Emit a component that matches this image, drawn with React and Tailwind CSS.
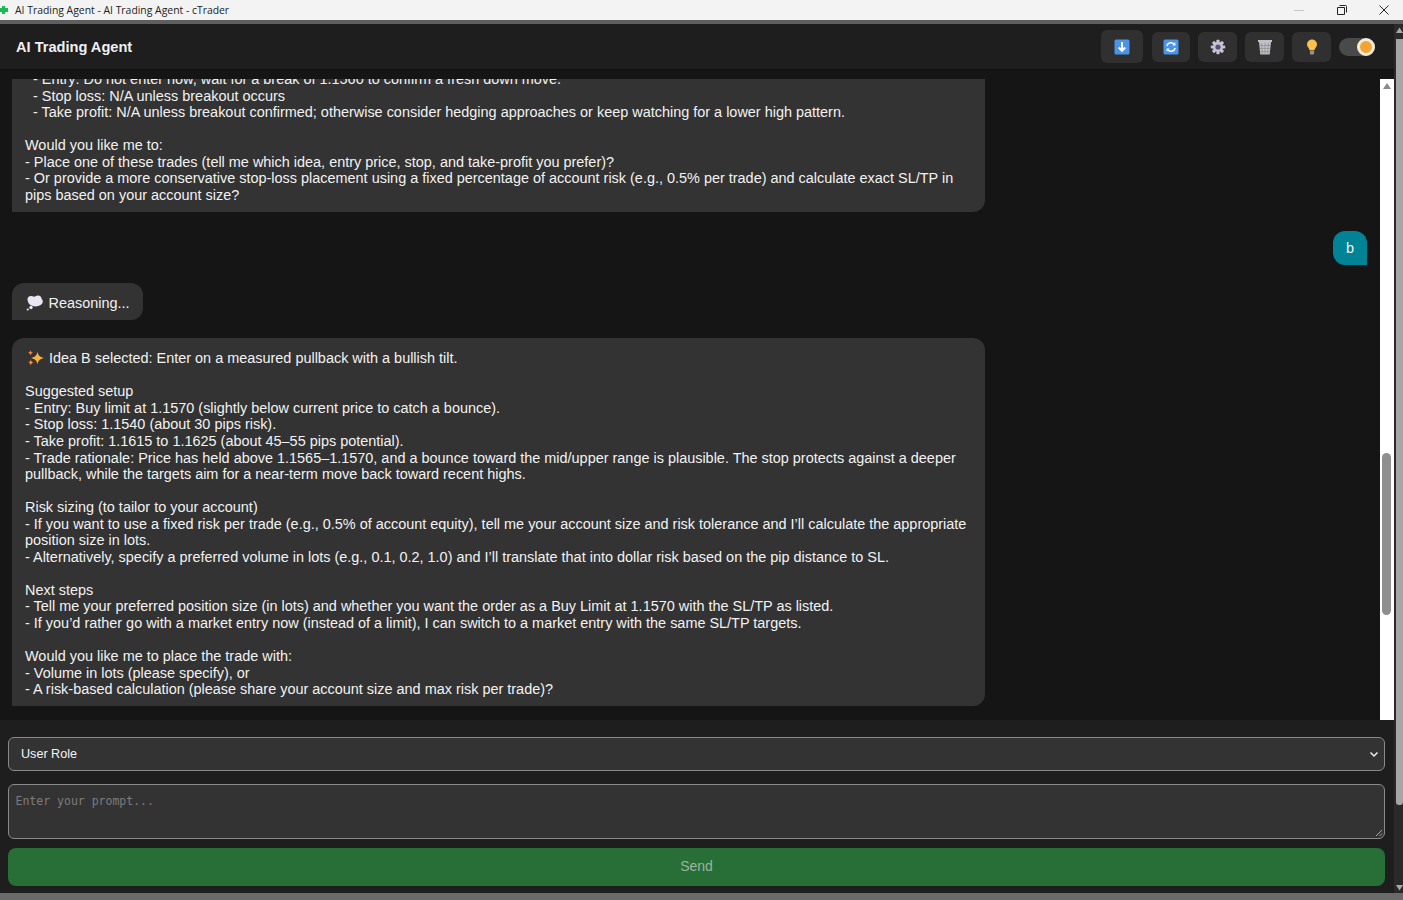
const lines1 = [
  '  - Entry: Do not enter now, wait for a break of 1.1560 to confirm a fresh down move.',
  '  - Stop loss: N/A unless breakout occurs',
  '  - Take profit: N/A unless breakout confirmed; otherwise consider hedging approaches or keep watching for a lower high pattern.',
  '',
  'Would you like me to:',
  '- Place one of these trades (tell me which idea, entry price, stop, and take-profit you prefer)?',
  '- Or provide a more conservative stop-loss placement using a fixed percentage of account risk (e.g., 0.5% per trade) and calculate exact SL/TP in pips based on your account size?',
].join('\n');

const lines2 = [
  'Suggested setup',
  '- Entry: Buy limit at 1.1570 (slightly below current price to catch a bounce).',
  '- Stop loss: 1.1540 (about 30 pips risk).',
  '- Take profit: 1.1615 to 1.1625 (about 45–55 pips potential).',
  '- Trade rationale: Price has held above 1.1565–1.1570, and a bounce toward the mid/upper range is plausible. The stop protects against a deeper pullback, while the targets aim for a near-term move back toward recent highs.',
  '',
  'Risk sizing (to tailor to your account)',
  '- If you want to use a fixed risk per trade (e.g., 0.5% of account equity), tell me your account size and risk tolerance and I’ll calculate the appropriate position size in lots.',
  '- Alternatively, specify a preferred volume in lots (e.g., 0.1, 0.2, 1.0) and I’ll translate that into dollar risk based on the pip distance to SL.',
  '',
  'Next steps',
  '- Tell me your preferred position size (in lots) and whether you want the order as a Buy Limit at 1.1570 with the SL/TP as listed.',
  '- If you’d rather go with a market entry now (instead of a limit), I can switch to a market entry with the same SL/TP targets.',
  '',
  'Would you like me to place the trade with:',
  '- Volume in lots (please specify), or',
  '- A risk-based calculation (please share your account size and max risk per trade)?',
].join('\n');

function DownloadIcon() {
  return (
    <svg width="16" height="16" viewBox="0 0 16 16">
      <rect x="0.500" y="0.500" width="15" height="15" rx="1.500" fill="#4a94ea" />
      <path d="M8 3v9M4.800 8.500L8 11.800l3.200-3.300" fill="none" stroke="#fff" strokeWidth="2" />
    </svg>
  );
}

function SyncIcon() {
  return (
    <svg width="16" height="16" viewBox="0 0 16 16">
      <rect x="0.500" y="0.500" width="15" height="15" rx="1.500" fill="#4a94ea" />
      <path d="M3.800 7a4.300 4.300 0 0 1 7.600-1.600M12.200 9a4.300 4.300 0 0 1-7.600 1.600" fill="none" stroke="#fff" strokeWidth="1.500" />
      <path d="M12.400 3.200v3.200H9.200zM3.600 12.800V9.600h3.200z" fill="#fff" />
    </svg>
  );
}

function GearIcon() {
  return (
    <svg width="16" height="16" viewBox="0 0 16 16">
      <g fill="#c9c4d4">
        <circle cx="8" cy="8" r="5" />
        <rect x="6.400" y="0.800" width="3.200" height="14.400" rx="0.800" />
        <rect x="6.400" y="0.800" width="3.200" height="14.400" rx="0.800" transform="rotate(45 8 8)" />
        <rect x="6.400" y="0.800" width="3.200" height="14.400" rx="0.800" transform="rotate(90 8 8)" />
        <rect x="6.400" y="0.800" width="3.200" height="14.400" rx="0.800" transform="rotate(135 8 8)" />
      </g>
      <circle cx="8" cy="8" r="2.600" fill="#5a4f78" />
    </svg>
  );
}

function TrashIcon() {
  return (
    <svg width="16" height="16" viewBox="0 0 16 16">
      <path d="M1 1h14v2h-1l-1.300 12.500H3.300L2 3H1z" fill="#c0c0c6" />
      <path d="M4.500 4l.8 11M8 4v11M11.500 4l-.8 11M2.600 6.500h10.800M3 9.500h10M3.200 12.500h9.600" stroke="#85858a" strokeWidth="0.600" fill="none" />
    </svg>
  );
}

function BulbIcon() {
  return (
    <svg width="14" height="16" viewBox="0 0 14 16">
      <path d="M7 0.500a5 5 0 0 0-5 5c0 2.300 1.900 3.300 2.600 5.700h4.800C10.100 8.800 12 7.800 12 5.500a5 5 0 0 0-5-5z" fill="#fbc04a" />
      <rect x="4.900" y="11.400" width="4.200" height="4" rx="1" fill="#9c8f86" />
    </svg>
  );
}

function ThoughtIcon() {
  return (
    <svg width="17" height="16" viewBox="0 0 17 16" className="shrink-0">
      <g fill="#e9e6f2">
        <ellipse cx="9.500" cy="6.500" rx="7.300" ry="5" />
        <circle cx="5" cy="4.500" r="3.500" />
        <circle cx="12" cy="4" r="3.500" />
        <circle cx="5" cy="12.500" r="1.700" />
        <circle cx="1.800" cy="14.500" r="1.100" />
      </g>
    </svg>
  );
}

function SparkleIcon() {
  return (
    <svg width="17" height="16" viewBox="0 0 17 16" className="shrink-0">
      <path d="M10.500 1.500c.7 4 2.100 5.400 6.300 6.500-4.200 1.100-5.600 2.500-6.300 6.500C9.800 10.500 8.400 9.100 4.200 8c4.200-1.100 5.600-2.500 6.300-6.500z" fill="#f9b23d" />
      <path d="M3.500 0c.4 1.800 1 2.400 2.800 2.800-1.800.4-2.400 1-2.800 2.800C3.100 3.800 2.500 3.200.7 2.800 2.500 2.400 3.100 1.800 3.500 0z" fill="#f58b42" />
      <path d="M3.800 9.500c.4 1.900 1.100 2.600 3 3-1.900.4-2.600 1.100-3 3-.4-1.900-1.100-2.600-3-3 1.900-.4 2.600-1.100 3-3z" fill="#f58b42" />
    </svg>
  );
}

function HeaderButton({ children, className = 'w-[39px] h-[30px]' }) {
  return (
    <button className={`flex items-center justify-center rounded-md bg-[#303030] ${className}`}>
      {children}
    </button>
  );
}

export default function App() {
  return (
    <div className="h-[900px] w-[1403px] overflow-hidden flex flex-col bg-[#151515] font-['Liberation_Sans',Arial,sans-serif]">
      {/* window title bar */}
      <div className="h-5 shrink-0 bg-[#f3f3f3] flex items-center text-[10.4px] text-[#222] font-['Open_Sans',sans-serif]">
        <svg width="8" height="10" viewBox="0 0 8 10" className="shrink-0">
          <path d="M0 3h2V1h3v2h3v4H5v2H2V7H0z" fill="#1db954" />
        </svg>
        <span className="ml-[7px] pt-[2px] flex-1">AI Trading Agent - AI Trading Agent - cTrader</span>
        <svg width="12" height="12" viewBox="0 0 12 12" className="mr-[31px]">
          <path d="M1 6.500h10" stroke="#c8c8c8" />
        </svg>
        <svg width="12" height="12" viewBox="0 0 12 12" className="mr-[30px]">
          <path d="M3.500 1.500h6a1 1 0 0 1 1 1v6M1.500 3.500h7v7h-7z" fill="none" stroke="#222" />
        </svg>
        <svg width="12" height="12" viewBox="0 0 12 12" className="mr-[13px]">
          <path d="M1.500 1.500l9 9M10.500 1.500l-9 9" stroke="#222" />
        </svg>
      </div>
      <div className="h-1 shrink-0 bg-[#5f5f5f]" />

      <div className="flex-1 min-h-0 flex">
        <div className="flex-1 min-w-0 flex flex-col">
          {/* app header */}
          <header className="h-[46px] shrink-0 bg-[#1e1e1e] flex items-center justify-between pl-4 pr-[19px] border-b border-[#111]">
            <h1 className="pt-[2px] text-[14.6px] font-bold text-[#f0f0f0]">AI Trading Agent</h1>
            <div className="flex items-center gap-2">
              <HeaderButton className="w-[42px] h-[33px] mr-[1px]"><DownloadIcon /></HeaderButton>
              <HeaderButton className="w-[38px] h-[30px]"><SyncIcon /></HeaderButton>
              <HeaderButton><GearIcon /></HeaderButton>
              <HeaderButton><TrashIcon /></HeaderButton>
              <HeaderButton><BulbIcon /></HeaderButton>
              <div className="w-9 h-[18px] rounded-full bg-[#4a4a4a] relative">
                <div className="absolute right-0 top-0 w-[18px] h-[18px] rounded-full bg-[#f2a533] border-[3px] border-[#f5ead6]" />
              </div>
            </div>
          </header>

          {/* messages */}
          <div className="flex-1 min-h-0 flex pt-[9px] bg-[#151515]">
            <div className="flex-1 min-w-0 overflow-hidden pl-3 pr-[13px] text-[14.45px] leading-[16.55px] text-[#f2f2f2]">
              <div className="w-[973px] -mt-[8px] rounded-br-xl bg-[#333] px-[13px] pb-[9px] whitespace-pre-wrap">{lines1}</div>
              <div className="flex justify-end mt-[19px]">
                <div className="w-[34px] h-[34px] rounded-xl rounded-br-none bg-[#008394] flex items-center justify-center">b</div>
              </div>
              <div className="mt-[18px] w-[131px] h-[37px] pt-[2px] rounded-xl rounded-bl-none bg-[#333] flex items-center gap-[5.5px] pl-[14px]">
                <ThoughtIcon />
                <span>Reasoning...</span>
              </div>
              <div className="mt-[18px] w-[973px] rounded-xl rounded-bl-none bg-[#333] px-[13px] pt-[11px] pb-[8px]">
                <div className="flex items-center gap-[5px] h-[17px] mb-[17px] ml-[2px]">
                  <SparkleIcon />
                  <span>Idea B selected: Enter on a measured pullback with a bullish tilt.</span>
                </div>
                <div className="whitespace-pre-wrap">{lines2}</div>
              </div>
            </div>
            {/* inner scrollbar */}
            <div className="w-[14px] shrink-0 bg-white relative flex flex-col items-center">
              <svg width="10" height="8" viewBox="0 0 10 8" className="mt-[3px]">
                <path d="M5 1l4 6H1z" fill="#8a8a8a" />
              </svg>
              <div className="absolute top-[374px] left-[2px] w-[9px] h-[162px] rounded-full bg-[#8f8f8f]" />
            </div>
          </div>

          {/* input panel */}
          <div className="h-[173px] shrink-0 bg-[#1e1e1e] px-2 pt-[17px] flex flex-col pr-[9px]">
            <div className="h-[34px] shrink-0 rounded-md border border-[#8a8a8a] bg-[#333] flex items-center justify-between pl-3 pr-[5px] text-[12.6px] text-[#f5f5f5]">
              <span>User Role</span>
              <svg width="10" height="10" viewBox="0 0 10 10">
                <path d="M1.500 3.500L5 7l3.500-3.500" fill="none" stroke="#eee" strokeWidth="1.500" />
              </svg>
            </div>
            <div className="mt-[13px] h-[55px] shrink-0 rounded-md border border-[#8a8a8a] bg-[#333] relative px-[6.500px] pt-[9px] font-['DejaVu_Sans_Mono',monospace] text-[11.500px] leading-[14px] text-[#7c7c7c]">
              Enter your prompt...
              <svg width="8" height="8" viewBox="0 0 8 8" className="absolute right-[1px] bottom-[1px]">
                <path d="M1 7l6-6M4.500 7L7 4.500" stroke="#aaa" fill="none" />
              </svg>
            </div>
            <button className="mt-[9px] h-[38px] shrink-0 rounded-lg bg-[#276f36] text-[14px] leading-[36px] pb-[2px] text-[#9db3a0]">Send</button>
          </div>
        </div>

        {/* outer scrollbar */}
        <div className="w-[9px] shrink-0 bg-[#2a2a2a] flex flex-col items-end">
          <svg width="7" height="8" viewBox="0 0 7 8" className="mt-[2px] shrink-0">
            <path d="M3.500 1.500L7 7H0z" fill="#a8a8a8" />
          </svg>
          <div className="mt-[5px] w-[7px] h-[766px] rounded-b-[3px] bg-[#a6a6a6] shrink-0" />
          <div className="flex-1" />
          <svg width="7" height="8" viewBox="0 0 7 8" className="mb-[1px] shrink-0">
            <path d="M3.500 6.500L7 1H0z" fill="#a8a8a8" />
          </svg>
        </div>
      </div>
      <div className="h-[7px] shrink-0 bg-[#6a6a6a]" />
    </div>
  );
}
